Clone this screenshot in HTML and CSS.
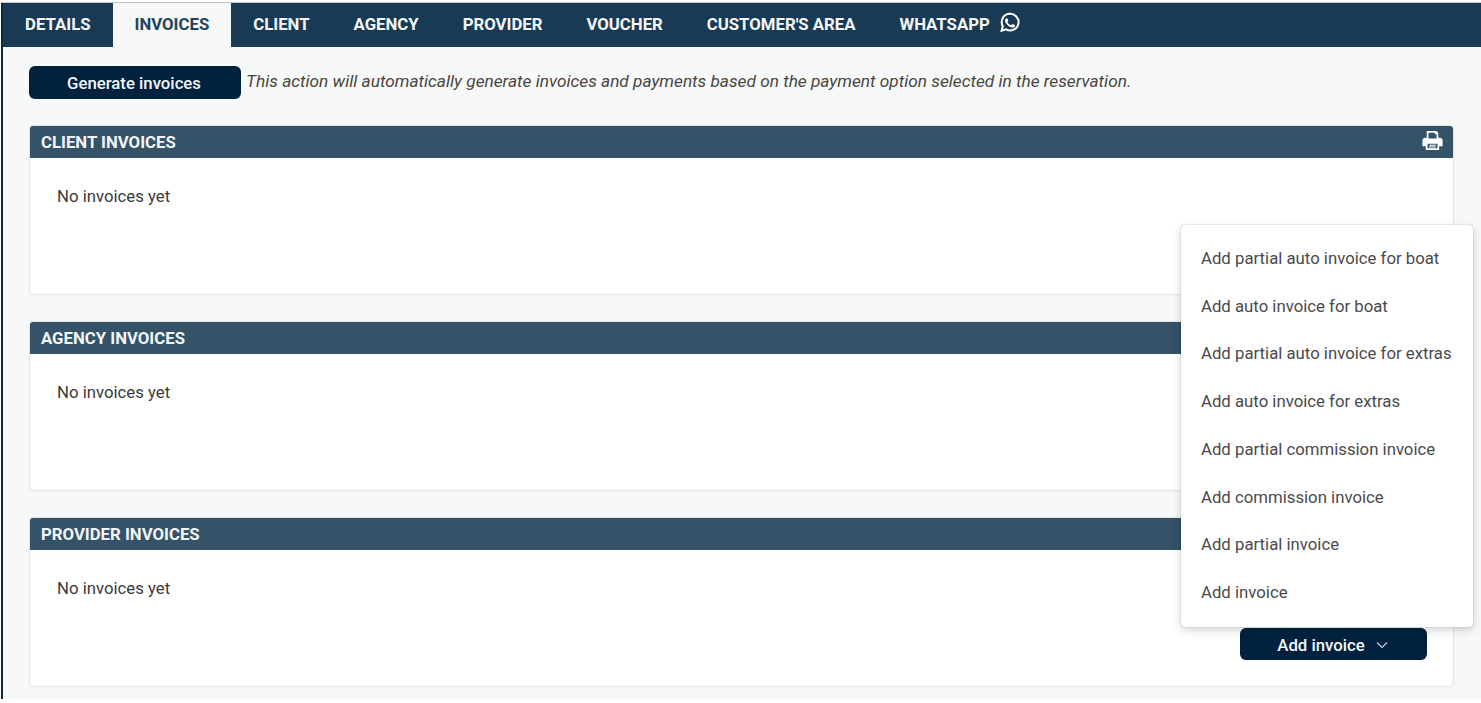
FILE: index.html
```html
<!DOCTYPE html>
<html lang="en">
<head>
<meta charset="utf-8">
<title>Invoices</title>
<link rel="stylesheet" href="styles.css">
</head>
<body>
<div class="page">
  <nav class="tabs">
    <a class="tab">DETAILS</a>
    <a class="tab active">INVOICES</a>
    <a class="tab">CLIENT</a>
    <a class="tab">AGENCY</a>
    <a class="tab">PROVIDER</a>
    <a class="tab">VOUCHER</a>
    <a class="tab">CUSTOMER'S AREA</a>
    <a class="tab">WHATSAPP<svg class="wa" viewBox="0 0 24 24" width="21" height="21"><path fill="none" stroke="#fff" stroke-width="2.3" d="M3 21.500l1.400-5.200A9.600 9.600 0 1 1 8 19.900z"/><path fill="#fff" d="M8.900 7.100c-.3 0-.7.100-1 .5-.4.400-1 1.100-1 2.400s1 2.700 1.100 2.900c.2.200 2 3.100 4.900 4.200 2.400.9 2.900.7 3.400.7s1.700-.7 1.900-1.300c.2-.7.2-1.200.2-1.300-.1-.2-.3-.2-.6-.4l-2-1c-.3-.1-.5-.1-.7.200l-.9 1.100c-.2.200-.3.200-.6.100-.3-.2-1.200-.5-2.300-1.400-.9-.8-1.400-1.700-1.600-2-.2-.3 0-.5.100-.6l.5-.5c.1-.2.200-.3.300-.5.100-.2 0-.4 0-.5l-.9-2.100c-.2-.5-.5-.5-.7-.5z"/></svg></a>
  </nav>
  <main class="content">
    <div class="generate">
      <button class="btn btn-generate">Generate invoices</button>
      <em class="hint">This action will automatically generate invoices and payments based on the payment option selected in the reservation.</em>
    </div>
    <section class="panel">
      <header class="panel-head">
        <span>CLIENT INVOICES</span>
        <svg class="print" viewBox="0 0 24 24" width="23" height="23"><path fill="#fff" fill-rule="evenodd" d="M6 2h10l2 2v5h1.500A3 3 0 0 1 22.500 12v6H19v4H5v-4H1.500v-6A3 3 0 0 1 4.500 9H6zM7.800 3.800V10h8.400V5.500h-1.700V3.800zM6.800 15.500v4.700h10.400v-4.700z"/><path fill="#fff" d="M8.500 16.500h7v1h-7zM8.500 18.300h7v1h-7z"/></svg>
      </header>
      <div class="panel-body"><p class="empty">No invoices yet</p></div>
    </section>
    <section class="panel">
      <header class="panel-head"><span>AGENCY INVOICES</span></header>
      <div class="panel-body"><p class="empty">No invoices yet</p></div>
    </section>
    <section class="panel">
      <header class="panel-head"><span>PROVIDER INVOICES</span></header>
      <div class="panel-body">
        <p class="empty">No invoices yet</p>
        <div class="actions">
          <div class="dropdown">
            <ul class="menu">
              <li>Add partial auto invoice for boat</li>
              <li>Add auto invoice for boat</li>
              <li>Add partial auto invoice for extras</li>
              <li>Add auto invoice for extras</li>
              <li>Add partial commission invoice</li>
              <li>Add commission invoice</li>
              <li>Add partial invoice</li>
              <li>Add invoice</li>
            </ul>
            <button class="btn btn-add">Add invoice<svg class="chev" viewBox="0 0 12 8" width="12" height="8"><path fill="none" stroke="#c9d3da" stroke-width="1.100" d="M1 1.500l5 5 5-5"/></svg></button>
          </div>
        </div>
      </div>
    </section>
  </main>
</div>
</body>
</html>
```
FILE: styles.css
```css
* { box-sizing: border-box; }
html, body { margin: 0; height: 100%; overflow: hidden; background: #fff; }
body { font-family: Roboto, "Liberation Sans", sans-serif; color: #3c3a38; padding: 3px 0 0 1px; }
.page { border-left: 2px solid #0b2a48; background: #f7f9f9; height: 696px; box-shadow: 0 -1px 0 #c4c7c9; }
.tabs { display: flex; height: 44px; background: #193a55; }
.tab { display: flex; align-items: center; padding: 0 22px 2px; color: #f5f7f8; font-size: 16.75px; font-weight: 700; white-space: nowrap; }
.tab.active { background: #f7f9f9; color: #24425b; }
.wa { margin-left: 9px; margin-top: -3px; }
.content { padding: 19px 28px 0 26px; }
.generate { display: flex; align-items: center; height: 33px; margin-bottom: 27px; }
.btn { border: 0; border-radius: 6px; background: #00223f; color: #f4f6f8; font-family: inherit; font-size: 16.75px; font-weight: 500; padding: 1px 2px 0 0; }
.btn-generate { width: 212px; height: 33px; }
.hint { margin-left: 5px; margin-top: -3px; font-size: 17.25px; color: #4a4540; }
.panel { margin-left: 1px; margin-bottom: 28px; height: 168px; background: #fff; border-radius: 3px; box-shadow: 0 0 2px rgba(0,0,0,.28); }
.panel-head { display: flex; justify-content: space-between; align-items: center; height: 32px; padding: 0 9px 0 11px; background: #345268; color: #f3f6f8; font-size: 16.75px; font-weight: 700; border-radius: 3px 3px 0 0; }
.print { margin-top: -4px; }
.panel-body { position: relative; height: 136px; padding: 28px 27px; }
.empty { margin: 0; font-size: 16.75px; line-height: 20px; }
.actions { display: flex; justify-content: flex-end; position: absolute; right: 26px; bottom: 26px; }
.dropdown { position: relative; }
.btn-add { display: flex; align-items: center; justify-content: center; gap: 11px; width: 187px; height: 32px; }
.menu { position: absolute; right: -46px; bottom: 33px; width: 292px; height: 402px; margin: 0; padding: 10px 0; list-style: none; background: #fff; border-radius: 4px; box-shadow: 0 0 1px rgba(0,0,0,.45), 0 3px 10px rgba(0,0,0,.18); display: flex; flex-direction: column; }
.menu li { flex: 1; display: flex; align-items: center; padding: 0 0 2px 20px; font-size: 16.75px; color: #4a4a4a; white-space: nowrap; }
```
